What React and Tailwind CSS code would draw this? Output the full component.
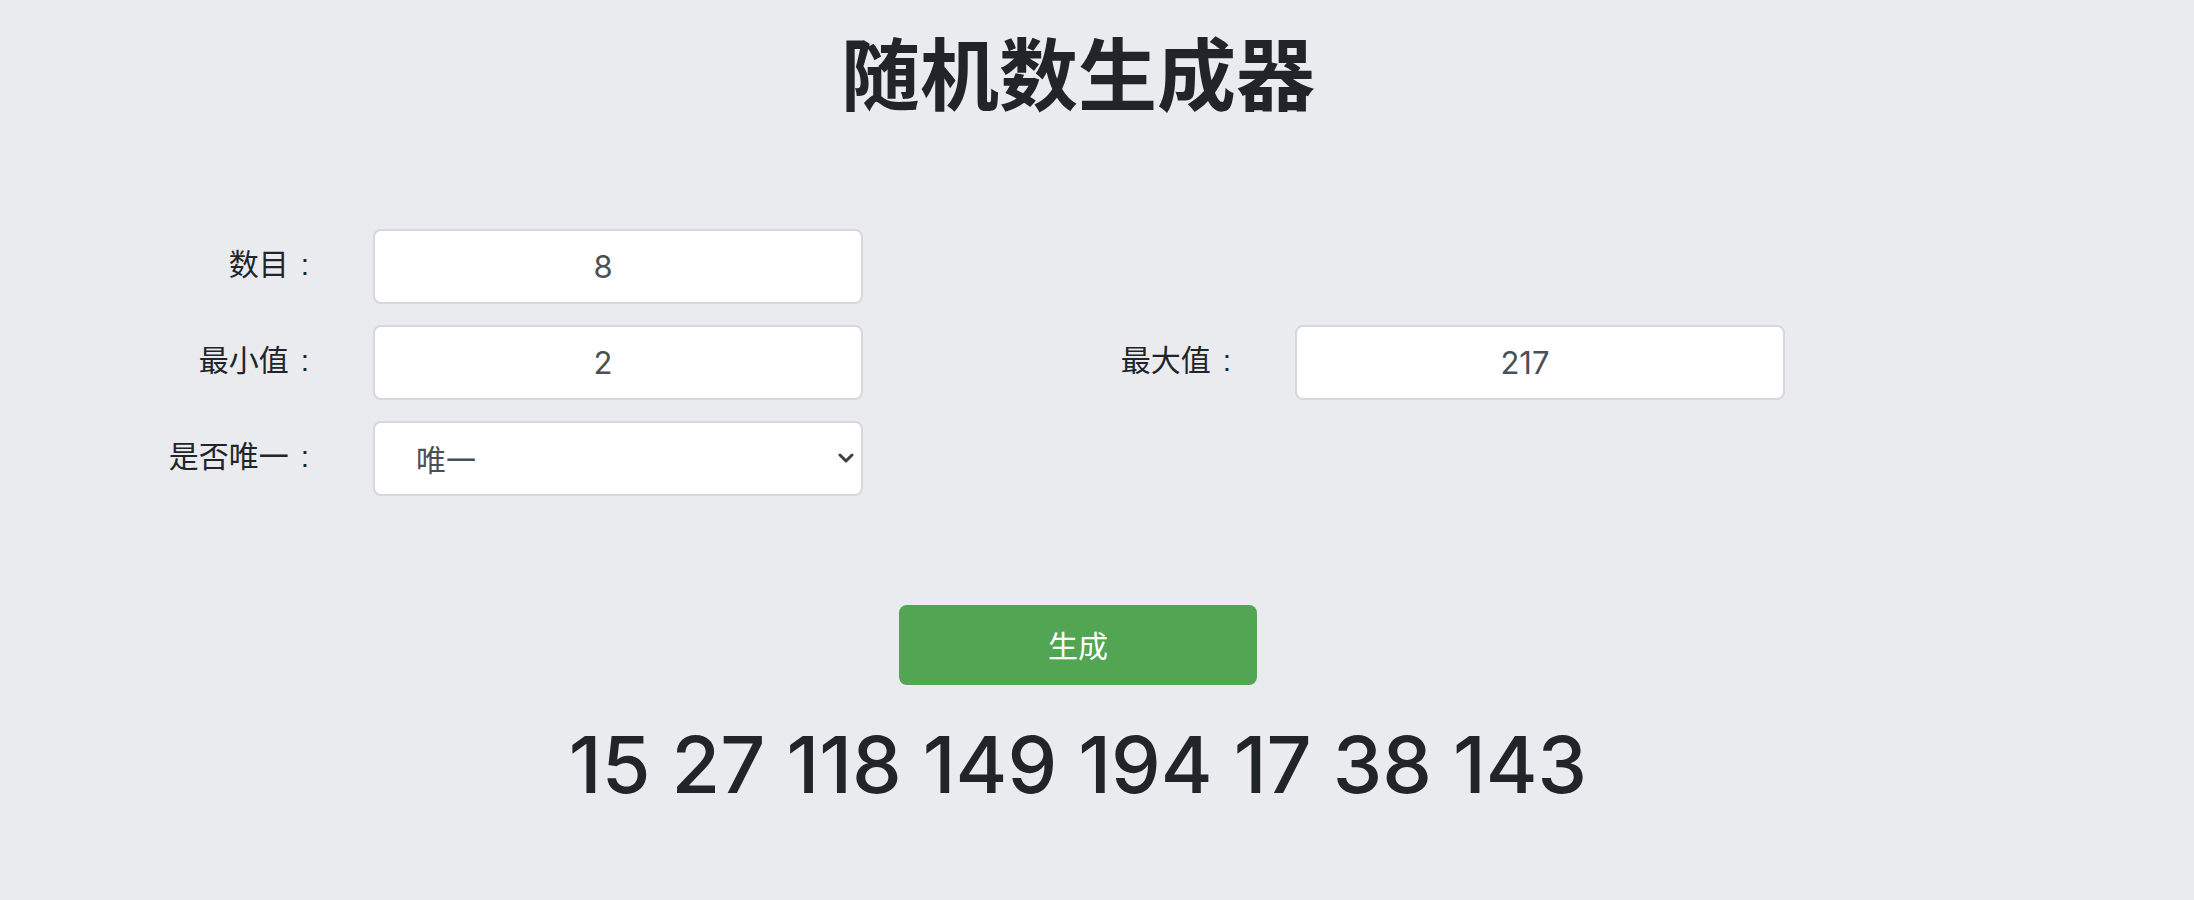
const cjk = { fontFamily: '"Noto Sans CJK SC", sans-serif' }
const sans = { fontFamily: 'Inter, "Noto Sans CJK SC", sans-serif' }

const Field = ({ label, children }) => (
  <div className="flex items-center w-[922px]">
    <label className="w-[209px] mb-[6px] text-right text-[30px] text-[#212529]" style={cjk}>
      {label}
      <span className="ml-[12px]" style={{ fontFamily: '"Liberation Sans", sans-serif' }}>:</span>
    </label>
    <div className="ml-[64px] w-[490px]">{children}</div>
  </div>
)

const inputClass =
  "w-full h-[75px] rounded-lg border-2 border-[#d5d8dc] bg-white pr-[30px] text-center text-[31px] text-[#495057] focus:outline-none"

export default function App() {
  return (
    <div className="min-h-screen bg-[#eaebef] w-full" style={sans}>
      <div className="w-[2156px] pt-[24px]">
        <h1 className="text-center text-[79px] font-bold leading-[1.2] text-[#212529]" style={cjk}>
          随机数生成器
        </h1>

        <form className="mt-[110px] flex flex-col gap-[21px] pl-[100px]">
          <div className="flex">
            <Field label="数目">
              <input className={inputClass} style={sans} defaultValue="8" />
            </Field>
          </div>
          <div className="flex">
            <Field label="最小值">
              <input className={inputClass} style={sans} defaultValue="2" />
            </Field>
            <Field label="最大值">
              <input className={inputClass} style={sans} defaultValue="217" />
            </Field>
          </div>
          <div className="flex">
            <Field label="是否唯一">
              <div className="relative">
                <select
                  className="w-full h-[75px] appearance-none rounded-lg border-2 border-[#d5d8dc] bg-white pl-[41px] text-[30px] text-[#495057] focus:outline-none"
                  style={cjk}
                  defaultValue="unique"
                >
                  <option value="unique">唯一</option>
                  <option value="repeat">可重复</option>
                </select>
                <svg
                  className="pointer-events-none absolute right-[9px] top-1/2 -translate-y-1/2"
                  width="16"
                  height="12"
                  viewBox="0 0 16 12"
                  fill="none"
                >
                  <path d="M2 3l6 6 6-6" stroke="#3c4046" strokeWidth="3" strokeLinecap="round" strokeLinejoin="round" />
                </svg>
              </div>
            </Field>
          </div>
        </form>

        <div className="mt-[109px] flex justify-center">
          <button
            type="button"
            className="w-[358px] h-[80px] rounded-lg bg-[#52a552] text-white text-[30px]"
            style={cjk}
          >
            生成
          </button>
        </div>

        <div className="mt-[32px] text-center text-[79px] font-medium leading-[1.2] text-[#212529]" style={sans}>
          15 27 118 149 194 17 38 143
        </div>
      </div>
    </div>
  )
}
